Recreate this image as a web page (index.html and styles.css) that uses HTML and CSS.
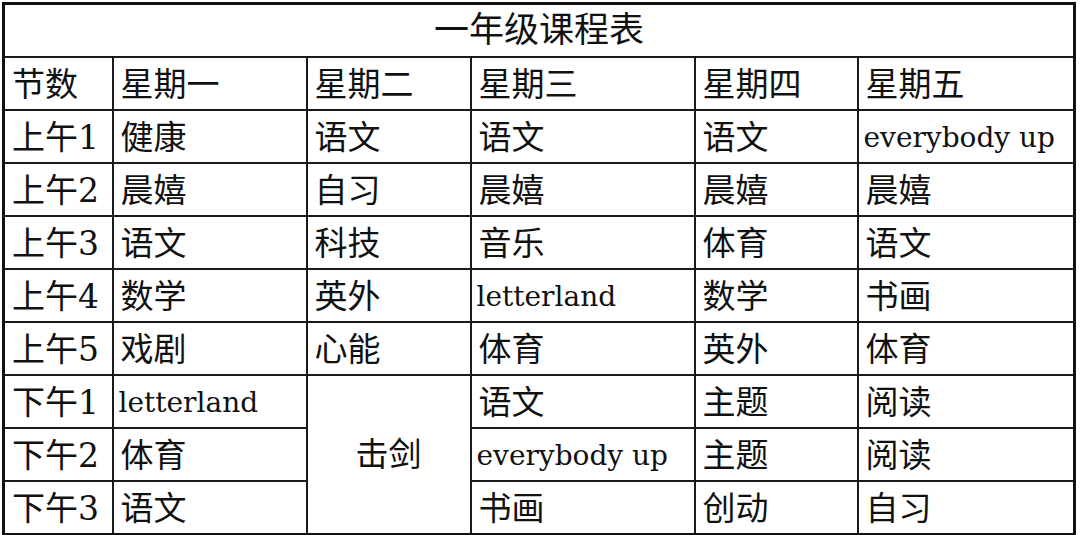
FILE: index.html
```html
<!DOCTYPE html>
<html lang="zh">
<head>
<meta charset="utf-8">
<link rel="stylesheet" href="styles.css">
</head>
<body>
<table class="schedule">
  <colgroup>
    <col class="c1"><col class="c2"><col class="c3"><col class="c4"><col class="c5"><col class="c6">
  </colgroup>
  <tr class="title-row"><td colspan="6" class="title">一年级课程表</td></tr>
  <tr><td>节数</td><td>星期一</td><td>星期二</td><td>星期三</td><td>星期四</td><td>星期五</td></tr>
  <tr><td>上午1</td><td>健康</td><td>语文</td><td>语文</td><td>语文</td><td class="en">everybody up</td></tr>
  <tr><td>上午2</td><td>晨嬉</td><td>自习</td><td>晨嬉</td><td>晨嬉</td><td>晨嬉</td></tr>
  <tr><td>上午3</td><td>语文</td><td>科技</td><td>音乐</td><td>体育</td><td>语文</td></tr>
  <tr><td>上午4</td><td>数学</td><td>英外</td><td class="en">letterland</td><td>数学</td><td>书画</td></tr>
  <tr><td>上午5</td><td>戏剧</td><td>心能</td><td>体育</td><td>英外</td><td>体育</td></tr>
  <tr><td>下午1</td><td class="en">letterland</td><td rowspan="3" class="center">击剑</td><td>语文</td><td>主题</td><td>阅读</td></tr>
  <tr><td>下午2</td><td>体育</td><td class="en">everybody up</td><td>主题</td><td>阅读</td></tr>
  <tr><td>下午3</td><td>语文</td><td>书画</td><td>创动</td><td>自习</td></tr>
</table>
</body>
</html>
```
FILE: styles.css
```css
html, body {
  margin: 0;
  padding: 0;
  background: #ffffff;
}
body {
  padding: 2px 0 0 2px;
}
.schedule {
  border-collapse: collapse;
  table-layout: fixed;
  width: 1074px;
  border: 3px solid #111;
  font-family: "DejaVu Serif", "Noto Sans CJK SC", serif;
  color: #111;
}
.c1 { width: 109px; }
.c2 { width: 194px; }
.c3 { width: 164px; }
.c4 { width: 224px; }
.c5 { width: 163px; }
.c6 { width: 217px; }
.schedule td {
  border: 2px solid #1a1a1a;
  height: 49px;
  padding: 2px 0 0 7px;
  font-size: 33px;
  line-height: 1;
  white-space: nowrap;
  overflow: hidden;
}
.schedule .title-row td {
  height: 51px;
}
.schedule td.title {
  text-align: center;
  font-size: 35px;
  padding: 0;
}
.schedule td.en {
  font-size: 28px;
  padding-left: 5px;
}
.schedule td.center {
  text-align: center;
  padding: 0;
}
```
